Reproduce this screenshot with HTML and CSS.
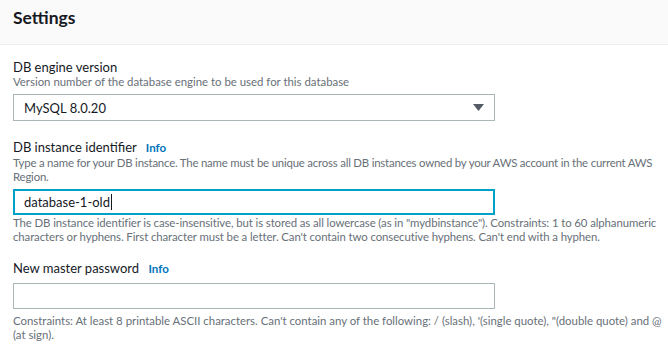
FILE: index.html
```html
<!DOCTYPE html>
<html>
<head>
<meta charset="utf-8">
<link rel="stylesheet" href="styles.css">
</head>
<body>
<div class="header"><h2 class="title">Settings</h2></div>
<div class="content">
  <div class="field f1">
    <div class="label">DB engine version</div>
    <div class="desc">Version number of the database engine to be used for this database</div>
    <div class="select">
      <span>MySQL 8.0.20</span>
      <svg class="caret" width="11" height="7" viewBox="0 0 11 7"><path d="M0 0H11L5.5 7Z" fill="#545b64"/></svg>
    </div>
  </div>
  <div class="field f2">
    <div class="label">DB instance identifier <a class="info">Info</a></div>
    <div class="desc tight">Type a name for your DB instance. The name must be unique across all DB instances owned by your AWS account in the current AWS<br>Region.</div>
    <div class="input focus"><span>database-1-old</span><span class="cursor"></span></div>
    <div class="desc after1">The DB instance identifier is case-insensitive, but is stored as all lowercase (as in "mydbinstance"). Constraints: 1 to 60 alphanumeric<br>characters or hyphens. First character must be a letter. Can't contain two consecutive hyphens. Can't end with a hyphen.</div>
  </div>
  <div class="field f3">
    <div class="label">New master password <a class="info">Info</a></div>
    <div class="input pw"></div>
    <div class="desc after2">Constraints: At least 8 printable ASCII characters. Can't contain any of the following: / (slash), '(single quote), "(double quote) and @<br>(at sign).</div>
  </div>
</div>
</body>
</html>
```
FILE: styles.css
```css
* { box-sizing: border-box; }
body {
  margin: 0;
  background: #fff;
  font-family: Lato, "Liberation Sans", sans-serif;
  color: #16191f;
  width: 668px;
}
.header {
  height: 45px;
  background: #fafafa;
  border-bottom: 1px solid #eaeded;
  padding: 8px 13px 0;
}
.title {
  margin: 0;
  font-size: 17.5px;
  font-weight: 700;
  line-height: 20px;
}
.content { padding: 0 0 0 13px; }
.field { display: flex; flex-direction: column; }
.f1 { margin-top: 14px; }
.f2 { margin-top: 18px; }
.f3 { margin-top: 16px; }
.label {
  font-size: 13px;
  line-height: 16px;
}
.info {
  font-size: 11.5px;
  font-weight: 700;
  color: #0073bb;
  margin-left: 6px;
}
.desc {
  font-size: 11.4px;
  line-height: 14px;
  color: #687078;
  white-space: nowrap;
}
.desc.tight { letter-spacing: -0.2px; }
.after1 { margin-top: 1px; letter-spacing: -0.1px; }
.after2 { margin-top: 5px; }
.select, .input {
  width: 482px;
  height: 27px;
  margin-top: 5px;
  border: 1px solid #aab7b8;
  display: flex;
  align-items: center;
  padding: 0 10px;
  font-size: 13px;
}
.select { justify-content: space-between; }
.input { height: 26px; }
.input.pw { margin-top: 6px; }
.input.focus { border: 2px solid #00a1c9; padding: 0 9px; }
.cursor { display: inline-block; width: 1px; height: 16px; background: #16191f; margin-left: 1px; }
```
